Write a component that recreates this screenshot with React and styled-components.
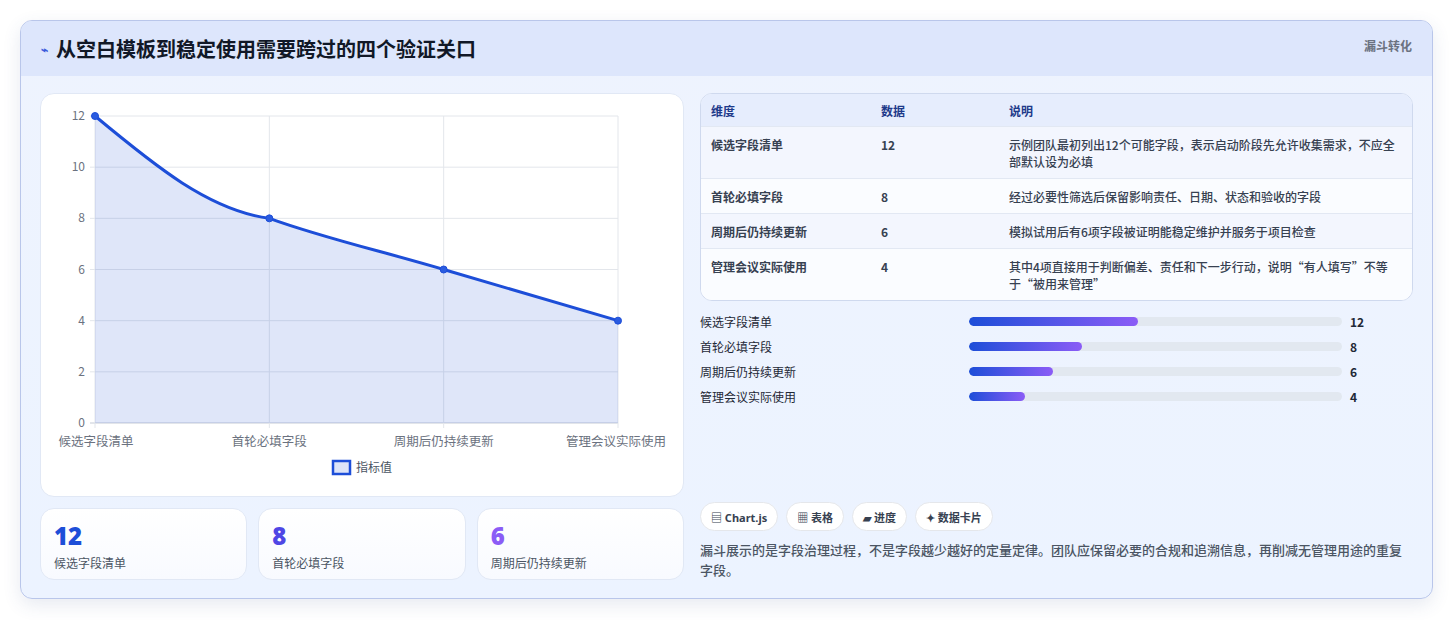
import React from "react";
import styled, { createGlobalStyle } from "styled-components";

const G = createGlobalStyle`
  body{margin:0;background:#fff;font-family:"Noto Sans CJK SC","Noto Sans",sans-serif;}
`;
const Page = styled.div`padding:20px 20px 21px 20px;`;
const Card = styled.div`
  border:1px solid #b9c6ea;border-radius:12px;overflow:hidden;
  background:linear-gradient(180deg,#eef3fe,#ecf3ff);
  box-shadow:0 6px 18px rgba(60,80,140,0.12);
`;
const Header = styled.div`
  height:55px;display:flex;align-items:center;justify-content:space-between;
  padding:0 20px;background:#dde6fc;
`;
const Title = styled.h1`
  margin:0;font-size:20px;font-weight:700;color:#111827;display:flex;align-items:center;gap:8px;
  span{color:#3b5bdb;font-size:12px;}
`;
const Tag = styled.div`font-size:12px;font-weight:700;color:#6b7280;align-self:flex-start;margin-top:16px;`;
const Body = styled.div`display:grid;grid-template-columns:644px 713px;gap:16px;padding:17px 19px 18px 19px;`;
const Col = styled.div`display:flex;flex-direction:column;`;
const ChartCard = styled.div`background:#fff;border:1px solid #e1e8f5;border-radius:14px;height:402px;`;
const Stats = styled.div`display:grid;grid-template-columns:repeat(3,1fr);gap:11px;margin-top:11px;`;
const Stat = styled.div`
  height:72px;border:1px solid #e1e8f5;border-radius:14px;background:linear-gradient(180deg,#fff,#f8faff);
  padding:12px 13px;box-sizing:border-box;
`;
const Num = styled.div`font-size:24px;font-weight:900;line-height:30px;color:${p=>p.c};font-family:"Noto Sans",sans-serif;`;
const StatLabel = styled.div`font-size:12px;color:#4b5563;margin-top:3px;`;
const Table = styled.div`border:1px solid #cfd9ee;border-radius:12px;overflow:hidden;background:#fff;`;
const Row = styled.div`
  display:grid;grid-template-columns:170px 128px 1fr;align-items:start;
  background:${p=>p.head?"#e6edfd":p.alt?"#f3f6fe":"#fafcff"};
  border-top:${p=>p.head?"none":"1px solid #e2e8f3"};
  font-size:12px;color:${p=>p.head?"#1e3a8a":"#374151"};font-weight:${p=>p.head?700:500};
  div{padding:${p=>p.head?"8px 10px 7px":"9px 10px 8px"};line-height:17px;}
  div:first-child,div:nth-child(2){font-weight:700;}
`;
const Bars = styled.div`display:flex;flex-direction:column;gap:7px;margin-top:11px;`;
const BarRow = styled.div`display:grid;grid-template-columns:269px 373px 1fr;align-items:center;height:18px;font-size:12px;color:#1f2937;`;
const Track = styled.div`height:9px;border-radius:5px;background:#e2e8f0;overflow:hidden;`;
const Fill = styled.div`height:100%;border-radius:5px;background:linear-gradient(90deg,#1d4ed8,#8b5cf6);`;
const Val = styled.div`padding-left:8px;font-weight:700;`;
const Chips = styled.div`display:flex;gap:8px;margin-top:auto;`;
const Chip = styled.div`
  height:29px;padding:0 10px;border:1px solid #e5e7eb;border-radius:15px;background:#fff;box-sizing:border-box;
  display:flex;align-items:center;font-size:11px;font-weight:700;color:#374151;font-family:"Noto Sans","Noto Sans CJK SC",sans-serif;
`;
const Note = styled.p`margin:9px 0 0;font-size:13px;line-height:20px;color:#4b5563;font-weight:500;`;

const labels=["候选字段清单","首轮必填字段","周期后仍持续更新","管理会议实际使用"];
const vals=[12,8,6,4];
const rows=[
  ["候选字段清单","12","示例团队最初列出12个可能字段，表示启动阶段先允许收集需求，不应全部默认设为必填"],
  ["首轮必填字段","8","经过必要性筛选后保留影响责任、日期、状态和验收的字段"],
  ["周期后仍持续更新","6","模拟试用后有6项字段被证明能稳定维护并服务于项目检查"],
  ["管理会议实际使用","4","其中4项直接用于判断偏差、责任和下一步行动，说明“有人填写”不等于“被用来管理”"],
];

function Chart(){
  const x0=54,x1=577,y0=22,y1=329;
  const xs=[0,1,2,3].map(i=>x0+(x1-x0)*i/3);
  const ys=vals.map(v=>y1-(y1-y0)*v/12);
  const line=`M${xs[0]},${ys[0]} C${xs[0]+60},${ys[0]+50} ${xs[1]-60},${ys[1]-8} ${xs[1]},${ys[1]} C${xs[1]+55},${ys[1]+20} ${xs[2]-60},${ys[2]-18} ${xs[2]},${ys[2]} L${xs[3]},${ys[3]}`;
  return(
    <svg width="644" height="402" style={{display:"block"}} fontFamily="Noto Sans CJK SC,sans-serif">
      {[0,2,4,6,8,10,12].map(t=>{const y=y1-(y1-y0)*t/12;return(<g key={t}>
        <line x1={x0-5} x2={x1} y1={y} y2={y} stroke={t===0?"#c5cbd6":"#e3e6eb"}/>
        <text x={x0-10} y={y+4} textAnchor="end" fontSize="12" fill="#6b7280">{t}</text></g>);})}
      {xs.map((x,i)=>(<g key={i}><line x1={x} x2={x} y1={y0} y2={y1+5} stroke="#e3e6eb"/>
        <text x={Math.min(Math.max(x,55),575)} y={352} textAnchor="middle" fontSize="12.5" fill="#6b7280">{labels[i]}</text></g>))}
      <path d={`${line} L${xs[3]},${y1} L${xs[0]},${y1} Z`} fill="rgba(29,78,216,0.14)"/>
      <path d={line} fill="none" stroke="#1d4ed8" strokeWidth="3"/>
      {xs.map((x,i)=><circle key={i} cx={x} cy={ys[i]} r="3.5" fill="#2b5ce0" stroke="#1d4ed8" strokeWidth="1"/>)}
      <rect x="292" y="367" width="17" height="13" fill="#dde4f8" stroke="#1d4ed8" strokeWidth="2.5"/>
      <text x="315" y="378" fontSize="12" fill="#4b5563">指标值</text>
    </svg>
  );
}

export default function App(){
  return(<Page><G/><Card>
    <Header><Title><span>⌁</span>从空白模板到稳定使用需要跨过的四个验证关口</Title><Tag>漏斗转化</Tag></Header>
    <Body>
      <Col>
        <ChartCard><Chart/></ChartCard>
        <Stats>
          <Stat><Num c="#1d4ed8">12</Num><StatLabel>候选字段清单</StatLabel></Stat>
          <Stat><Num c="#4f46e5">8</Num><StatLabel>首轮必填字段</StatLabel></Stat>
          <Stat><Num c="#8b5cf6">6</Num><StatLabel>周期后仍持续更新</StatLabel></Stat>
        </Stats>
      </Col>
      <Col>
        <Table>
          <Row head><div>维度</div><div>数据</div><div>说明</div></Row>
          {rows.map((r,i)=><Row key={i} alt={i%2===0}><div>{r[0]}</div><div>{r[1]}</div><div>{r[2]}</div></Row>)}
        </Table>
        <Bars>{vals.map((v,i)=><BarRow key={i}><span>{labels[i]}</span><Track><Fill style={{width:`${v/12*45.3}%`}}/></Track><Val>{v}</Val></BarRow>)}</Bars>
        <Chips><Chip>▤ Chart.js</Chip><Chip>▦ 表格</Chip><Chip>▰ 进度</Chip><Chip>✦ 数据卡片</Chip></Chips>
        <Note>漏斗展示的是字段治理过程，不是字段越少越好的定量定律。团队应保留必要的合规和追溯信息，再削减无管理用途的重复字段。</Note>
      </Col>
    </Body>
  </Card></Page>);
}
